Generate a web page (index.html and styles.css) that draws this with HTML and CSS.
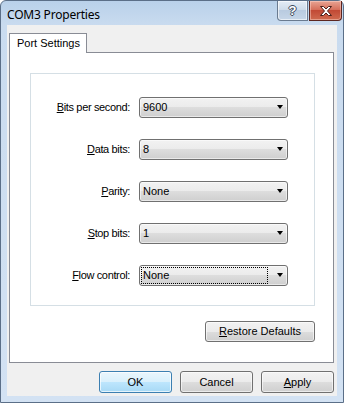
FILE: index.html
```html
<!DOCTYPE html>
<html>
<head>
<meta charset="utf-8">
<title>COM3 Properties</title>
<link rel="stylesheet" href="styles.css">
</head>
<body>
<div class="window">
  <div class="titlebar">
    <span class="title">COM3 Properties</span>
    <div class="caption-buttons">
      <div class="cap-btn help"><span class="qmark">?</span></div>
      <div class="cap-btn close">
        <svg width="14" height="10" viewBox="0 0 14 10"><path d="M1.5 0.5 L4.5 0.5 L7 3 L9.5 0.5 L12.5 0.5 L8.5 5 L12.5 9.5 L9.5 9.5 L7 7 L4.5 9.5 L1.5 9.5 L5.5 5 Z" fill="#ffffff" stroke="#4a1f1a" stroke-width="1" stroke-linejoin="round"/></svg>
      </div>
    </div>
  </div>
  <div class="client">
    <div class="tabs"><div class="tab">Port Settings</div></div>
    <div class="panel">
      <div class="group">
        <label class="lbl"><u>B</u>its per second:</label>
        <div class="combo"><span class="val">9600</span><span class="arrow"></span></div>
        <label class="lbl"><u>D</u>ata bits:</label>
        <div class="combo"><span class="val">8</span><span class="arrow"></span></div>
        <label class="lbl"><u>P</u>arity:</label>
        <div class="combo"><span class="val">None</span><span class="arrow"></span></div>
        <label class="lbl"><u>S</u>top bits:</label>
        <div class="combo"><span class="val">1</span><span class="arrow"></span></div>
        <label class="lbl"><u>F</u>low control:</label>
        <div class="combo focused"><span class="val">None</span><span class="arrow"></span></div>
      </div>
      <div class="panel-actions">
        <button class="btn restore"><u>R</u>estore Defaults</button>
      </div>
    </div>
    <div class="actions">
      <button class="btn default">OK</button>
      <button class="btn">Cancel</button>
      <button class="btn"><u>A</u>pply</button>
    </div>
  </div>
</div>
</body>
</html>
```

FILE: styles.css
```css
* { box-sizing: border-box; }
html, body { margin: 0; padding: 0; }
body {
  width: 344px;
  height: 403px;
  background: #ffffff;
  font-family: "Liberation Sans", Arial, sans-serif;
  font-size: 11px;
  color: #000;
}
.window {
  width: 344px;
  height: 403px;
  border: 1px solid #5b6f88;
  border-radius: 6px 6px 0 0;
  background: linear-gradient(#b9d1ea 0px, #c9dbef 24px, #d3e2f3 100%);
  padding: 0 6px 6px 6px;
  display: flex;
  flex-direction: column;
}
.titlebar {
  height: 24px;
  display: flex;
  align-items: flex-start;
  justify-content: space-between;
  margin-right: -5px;
}
.title {
  font-family: "Noto Sans", "Open Sans", sans-serif;
  font-size: 12px;
  letter-spacing: -0.2px;
  line-height: 16px;
  margin-top: 6px;
  color: #000;
}
.caption-buttons {
  display: flex;
  gap: 1px;
}
.cap-btn {
  height: 20px;
  border: 1px solid #6a7b90;
  border-top: none;
  display: flex;
  align-items: center;
  justify-content: center;
}
.help {
  width: 31px;
  border-radius: 0 0 0 4px;
  background: linear-gradient(#e4ecf5 0%, #cfdcea 45%, #b9cbe0 50%, #c6d6e8 100%);
  box-shadow: inset 0 0 0 1px rgba(255,255,255,0.6);
}
.qmark {
  font-family: "Liberation Sans", Arial, sans-serif;
  font-weight: bold;
  font-size: 13px;
  line-height: 13px;
  color: #ffffff;
  text-shadow: 1px 0 0 #3d4a5c, -1px 0 0 #3d4a5c, 0 1px 0 #3d4a5c, 0 -1px 0 #3d4a5c;
}
.close {
  width: 33px;
  border-color: #5c2620;
  border-radius: 0 0 4px 0;
  background: linear-gradient(#e8a493 0%, #d6705c 45%, #c24a35 50%, #cf6a4f 100%);
  box-shadow: inset 0 0 0 1px rgba(255,220,210,0.45);
}
.close svg { display: block; }
.client {
  flex: 1;
  background: #f0f0f0;
  padding: 8px 3px 0 2px;
  display: flex;
  flex-direction: column;
}
.tabs {
  height: 19px;
  display: flex;
}
.tab {
  position: relative;
  z-index: 1;
  width: 78px;
  height: 20px;
  background: #ffffff;
  border: 1px solid #898c95;
  border-bottom: none;
  padding: 3px 0 0 7px;
  line-height: 13px;
}
.panel {
  height: 311px;
  background: #ffffff;
  border: 1px solid #898c95;
  padding: 20px 18px 0 20px;
  display: flex;
  flex-direction: column;
}
.group {
  height: 233px;
  border: 1px solid #d5dfe5;
  padding-top: 23px;
  display: grid;
  grid-template-columns: 99px 149px;
  grid-auto-rows: 21px;
  column-gap: 9px;
  row-gap: 21px;
  align-content: start;
}
.lbl {
  text-align: right;
  align-self: center;
  line-height: 13px;
  letter-spacing: -0.35px;
}
.combo {
  position: relative;
  height: 21px;
  border: 1px solid #707070;
  border-radius: 3px;
  background: linear-gradient(#f2f2f2 0%, #ebebeb 50%, #dddddd 50%, #cfcfcf 100%);
  box-shadow: inset 0 0 0 1px rgba(255,255,255,0.55);
  display: flex;
  align-items: center;
  padding-left: 3px;
}
.val { line-height: 13px; }
.arrow {
  position: absolute;
  right: 4px;
  top: 7px;
  width: 0;
  height: 0;
  border-left: 3.5px solid transparent;
  border-right: 3.5px solid transparent;
  border-top: 4px solid #000;
}
.focused::after {
  content: "";
  position: absolute;
  left: 1px;
  top: 1px;
  bottom: 1px;
  right: 19px;
  border: 1px dotted #000;
}
.panel-actions {
  margin-top: 15px;
  display: flex;
  justify-content: flex-end;
}
.btn {
  font-family: "Liberation Sans", Arial, sans-serif;
  font-size: 11px;
  color: #000;
  height: 22px;
  width: 73px;
  border: 1px solid #707070;
  border-radius: 3px;
  background: linear-gradient(#f2f2f2 0%, #ebebeb 50%, #dddddd 50%, #cfcfcf 100%);
  box-shadow: inset 0 0 0 1px rgba(255,255,255,0.6);
  padding: 0;
  line-height: 13px;
}
.restore { width: 110px; height: 21px; }
.btn.default {
  border-color: #3c7fb1;
  background: linear-gradient(#eaf6fd 0%, #d9f0fc 50%, #bee6fd 50%, #a7d9f5 100%);
  box-shadow: inset 0 0 0 1px rgba(255,255,255,0.7);
}
.actions {
  margin-top: 8px;
  display: flex;
  justify-content: flex-end;
  gap: 8px;
}
```
